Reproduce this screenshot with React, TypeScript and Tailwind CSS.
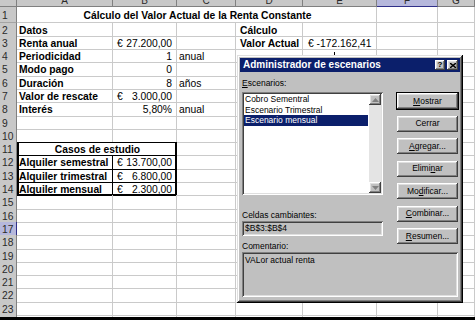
import React from 'react';

type Cell = {
  c?: React.ReactNode;
  k?: string;
  span?: number;
  rc?: string;
  bc?: string;
};

const COLS = ['A', 'B', 'C', 'D', 'E', 'F', 'G'];
const B = 'font-bold';
const RIGHT = 'justify-end pr-[4px]';
const MONEY = 'justify-between pl-[4px] pr-[4px]';

const raised =
  'shadow-[inset_-1px_-1px_0_#404040,inset_1px_1px_0_#ffffff,inset_-2px_-2px_0_#808080,inset_2px_2px_0_#dfdfdf]';
const sunken =
  'shadow-[inset_1px_1px_0_#808080,inset_-1px_-1px_0_#ffffff,inset_2px_2px_0_#404040,inset_-2px_-2px_0_#dfdfdf]';

function Money({ v }: { v: string }) {
  return (
    <>
      <span>€</span>
      <span>{v}</span>
    </>
  );
}

const rows: Record<number, Cell[]> = {
  1: [{ span: 5, c: 'Cálculo del Valor Actual de la Renta Constante', k: 'justify-center font-bold' }, {}, {}],
  2: [{ c: 'Datos', k: B }, {}, {}, { c: 'Cálculo', k: `${B} pl-[4px]` }, {}, {}, {}],
  3: [
    { c: 'Renta anual', k: B },
    { c: <Money v="27.200,00" />, k: MONEY },
    {},
    { c: 'Valor Actual', k: `${B} pl-[4px]` },
    { c: '€ -172.162,41', k: 'pl-[5px]' },
    {},
    {},
  ],
  4: [
    { c: 'Periodicidad', k: B },
    { c: '1', k: RIGHT },
    { c: 'anual' },
    {},
    { c: <span className="ml-[29px] mb-[5px] h-[5px] w-px bg-black" /> },
    {},
    {},
  ],
  5: [{ c: 'Modo pago', k: B }, { c: '0', k: RIGHT }, {}, {}, {}, {}, {}],
  6: [{ c: 'Duración', k: B }, { c: '8', k: RIGHT }, { c: 'años' }, {}, {}, {}, {}],
  7: [{ c: 'Valor de rescate', k: B }, { c: <Money v="3.000,00" />, k: MONEY }, {}, {}, {}, {}, {}],
  8: [{ c: 'Interés', k: B }, { c: '5,80%', k: RIGHT }, { c: 'anual' }, {}, {}, {}, {}],
  10: [{ bc: 'border-b-black' }, { bc: 'border-b-black' }, {}, {}, {}, {}, {}],
  11: [
    {
      span: 2,
      c: 'Casos de estudio',
      k: 'justify-center font-bold shadow-[inset_2px_0_0_#000,inset_-1px_0_0_#000,inset_0_1px_0_#000]',
      rc: 'border-r-black',
      bc: 'border-b-black',
    },
    {},
    {},
    {},
    {},
    {},
  ],
  12: [
    { c: 'Alquiler semestral', k: `${B} shadow-[inset_2px_0_0_#000]`, rc: 'border-r-black', bc: 'border-b-black' },
    { c: <Money v="13.700,00" />, k: `${MONEY} shadow-[inset_-1px_0_0_#000]`, rc: 'border-r-black', bc: 'border-b-black' },
    {},
    {},
    {},
    {},
    {},
  ],
  13: [
    { c: 'Alquiler trimestral', k: `${B} shadow-[inset_2px_0_0_#000]`, rc: 'border-r-black', bc: 'border-b-black' },
    { c: <Money v="6.800,00" />, k: `${MONEY} shadow-[inset_-1px_0_0_#000]`, rc: 'border-r-black', bc: 'border-b-black' },
    {},
    {},
    {},
    {},
    {},
  ],
  14: [
    {
      c: 'Alquiler mensual',
      k: `${B} shadow-[inset_2px_0_0_#000,inset_0_-1px_0_#000]`,
      rc: 'border-r-black',
      bc: 'border-b-black',
    },
    {
      c: <Money v="2.300,00" />,
      k: `${MONEY} shadow-[inset_-1px_0_0_#000,inset_0_-1px_0_#000]`,
      rc: 'border-r-black',
      bc: 'border-b-black',
    },
    {},
    {},
    {},
    {},
    {},
  ],
};

const gridCols = 'grid grid-cols-[17px_96px_64px_59px_67px_74px_61px_1fr]';

function SheetRow({ n }: { n: number }) {
  const cells: Cell[] = rows[n] ?? [{}, {}, {}, {}, {}, {}, {}];
  const selected = n === 17;
  return (
    <div className={`${gridCols} ${n === 1 ? 'h-[15.5px]' : 'h-[13.3px]'}`}>
      <div
        className={`flex items-center pl-[2px] pt-[3px] text-[10.3px] leading-none text-[#2a2a2a] border-r border-b ${
          selected
            ? 'bg-[#b6b8dc] border-r-[#303088] border-b-[#9a9ac8]'
            : 'bg-[#c8c8c8] border-r-[#808080] border-b-[#a4a4a4]'
        }`}
      >
        {n}
      </div>
      {cells.map((cell, i) => (
        <div
          key={i}
          className={`flex items-center whitespace-nowrap pl-[2px] pt-[3px] text-[10.3px] leading-none text-black border-r border-b ${
            cell.rc ?? 'border-r-[#cacaca]'
          } ${cell.bc ?? 'border-b-[#cacaca]'} ${cell.span === 5 ? 'col-span-5' : cell.span === 2 ? 'col-span-2' : ''} ${
            cell.k ?? ''
          }`}
        >
          {cell.c}
        </div>
      ))}
    </div>
  );
}

function Arrow({ down }: { down?: boolean }) {
  return (
    <div className={`flex h-[11px] w-[12px] items-center justify-center bg-[#c0c0c0] ${raised}`}>
      <svg width="7" height="4" viewBox="0 0 7 4">
        <polygon points={down ? '0,0 7,0 3.5,4' : '3.5,0 7,4 0,4'} fill="#808080" />
      </svg>
    </div>
  );
}

function Btn({ children, def }: { children: React.ReactNode; def?: boolean }) {
  return (
    <div
      className={`flex h-[16px] w-[61px] items-center justify-center bg-[#c0c0c0] text-black ${raised} ${
        def ? 'outline outline-1 outline-black' : ''
      }`}
    >
      {children}
    </div>
  );
}

function Dialog() {
  return (
    <div
      className={`absolute left-[237px] top-[55px] flex h-[248px] w-[226px] flex-col bg-[#c0c0c0] p-[3px] text-[8.5px] leading-none text-black shadow-[inset_-1px_-1px_0_#000,inset_1px_1px_0_#dfdfdf,inset_-2px_-2px_0_#404040,inset_2px_2px_0_#ffffff,inset_-3px_-3px_0_#808080]`}
    >
      <div className="flex h-[14px] items-center justify-between bg-[#0b1f6b] pl-[3px] pr-[2px]">
        <span className="text-[10px] font-bold text-white">Administrador de escenarios</span>
        <div className="flex gap-[2px]">
          <div className={`flex h-[10px] w-[10px] items-center justify-center bg-[#c0c0c0] text-[8px] font-bold ${raised}`}>
            ?
          </div>
          <div className={`flex h-[10px] w-[11px] items-center justify-center bg-[#c0c0c0] ${raised}`}>
            <svg width="6" height="5" viewBox="0 0 6 5">
              <path d="M0 0L6 5M6 0L0 5" stroke="#000" strokeWidth="1.4" />
            </svg>
          </div>
        </div>
      </div>

      <div className="flex flex-col px-[2px]">
        <div className="flex gap-[14px]">
          <div className="flex w-[141px] flex-col">
            <div className="mt-[5px] h-[12px] leading-[12px]">
              <u>E</u>scenarios:
            </div>
            <div className={`mt-[3px] flex h-[103px] bg-white p-[2px] ${sunken}`}>
              <div className="flex flex-1 flex-col">
                <div className="h-[10.5px] pl-[1px] leading-[10.5px]">Cobro Sementral</div>
                <div className="h-[10.5px] pl-[1px] leading-[10.5px]">Escenario Trimestral</div>
                <div className="mr-[1px] h-[10.5px] bg-[#0b1f6b] pl-[1px] leading-[10.5px] text-white">
                  Escenario mensual
                </div>
              </div>
              <div className="flex w-[12px] flex-col justify-between bg-[#e4e4e4]">
                <Arrow />
                <Arrow down />
              </div>
            </div>
            <div className="mt-[14px] h-[12px] leading-[12px]">Celdas cambiantes:</div>
            <div className={`flex h-[15px] items-center pl-[3px] ${sunken}`}>$B$3:$B$4</div>
            <div className="mt-[4px] h-[12px] leading-[12px]">Comentario:</div>
          </div>
          <div className="mt-[21px] flex flex-col gap-[6.5px]">
            <Btn def>
              <span>
                <u>M</u>ostrar
              </span>
            </Btn>
            <Btn>Cerrar</Btn>
            <Btn>
              <span>
                <u>A</u>gregar...
              </span>
            </Btn>
            <Btn>
              <span>
                Elimi<u>n</u>ar
              </span>
            </Btn>
            <Btn>
              <span>
                Mo<u>d</u>ificar...
              </span>
            </Btn>
            <Btn>
              <span>
                <u>C</u>ombinar...
              </span>
            </Btn>
            <Btn>
              <span>
                <u>R</u>esumen...
              </span>
            </Btn>
          </div>
        </div>
        <div className={`h-[45px] pl-[3px] pt-[4px] ${sunken}`}>VALor actual renta</div>
      </div>
    </div>
  );
}

export default function App() {
  const nums = Array.from({ length: 24 }, (_, i) => i + 1);
  return (
    <div className="relative h-[320px] w-[475px] overflow-hidden border-b-[3px] border-black bg-white font-['Liberation_Sans',Arial,sans-serif]">
      <div className={`${gridCols} h-[7px]`}>
        <div className="border-r border-b border-r-[#808080] border-b-[#808080] bg-[#c8c8c8]" />
        {COLS.map((c) => (
          <div
            key={c}
            className={`flex items-end justify-center overflow-hidden text-[10px] leading-[10px] text-[#2a2a2a] border-r border-b ${
              c === 'F'
                ? 'bg-[#b6b8dc] border-r-[#808080] border-b-[#303088]'
                : 'bg-[#c8c8c8] border-r-[#808080] border-b-[#808080]'
            }`}
          >
            {c}
          </div>
        ))}
      </div>
      {nums.map((n) => (
        <SheetRow key={n} n={n} />
      ))}
      <Dialog />
    </div>
  );
}
